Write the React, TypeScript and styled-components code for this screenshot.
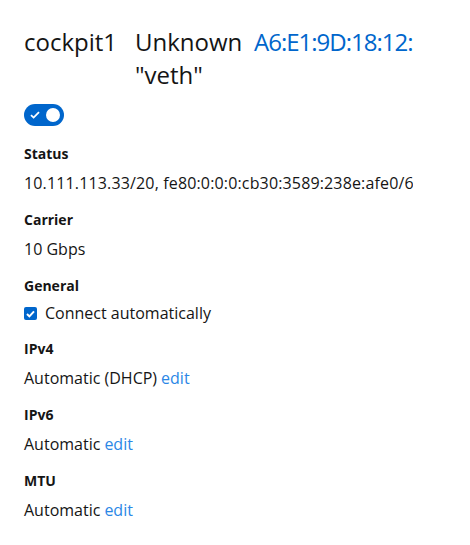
import React from "react";
import styled, { createGlobalStyle } from "styled-components";

const Global = createGlobalStyle`
  html, body { margin: 0; padding: 0; background: #fff; }
  body { font-family: "Open Sans", "Liberation Sans", sans-serif; color: #151515; }
`;

const Page = styled.div`
  width: 389px;
  padding: 25px 0 0 24px;
  overflow: hidden;
`;

const Header = styled.div`
  display: grid;
  grid-template-columns: 94px 102px 1fr;
  column-gap: 17px;
  font-size: 24px;
  line-height: 33px;
  white-space: nowrap;
`;

const HeaderCell = styled.div<{ $link?: boolean }>`
  display: flex;
  flex-direction: column;
  color: ${(p) => (p.$link ? "#0066cc" : "#151515")};
  letter-spacing: ${(p) => (p.$link ? "-1px" : "0")};
`;

const Switch = styled.label`
  display: inline-flex;
  margin: 13px 0 17px;
`;

const SwitchTrack = styled.span`
  position: relative;
  width: 40px;
  height: 22px;
  border-radius: 11px;
  background: #0066cc;
  display: inline-flex;
  align-items: center;
`;

const SwitchKnob = styled.span`
  position: absolute;
  right: 4px;
  top: 4px;
  width: 14px;
  height: 14px;
  border-radius: 50%;
  background: #fff;
`;

const SwitchIcon = styled.svg`
  margin-left: 6px;
`;

const Group = styled.div`
  display: flex;
  flex-direction: column;
  gap: 7px;
  margin-bottom: 14px;
`;

const Label = styled.div`
  font-size: 14px;
  line-height: 21px;
  font-weight: 700;
`;

const Value = styled.div<{ $compact?: boolean; $wide?: boolean }>`
  font-size: 16px;
  line-height: ${(p) => (p.$compact ? "21px" : "24px")};
  letter-spacing: ${(p) => (p.$wide ? "0.15px" : "0")};
  white-space: nowrap;
  display: flex;
  align-items: center;
  gap: 8px;
`;

const Link = styled.a`
  color: #2b87e6;
  text-decoration: none;
  margin-left: 4px;
`;

const Check = styled.span`
  width: 13px;
  height: 13px;
  border-radius: 2px;
  background: #0066cc;
  display: inline-flex;
  align-items: center;
  justify-content: center;
`;

export default function App() {
  return (
    <>
      <Global />
      <Page>
        <Header>
          <HeaderCell>cockpit1</HeaderCell>
          <HeaderCell>
            <span>Unknown</span>
            <span>"veth"</span>
          </HeaderCell>
          <HeaderCell $link>A6:E1:9D:18:12:</HeaderCell>
        </Header>
        <Switch>
          <SwitchTrack>
            <SwitchIcon width="10" height="8" viewBox="0 0 10 8">
              <path d="M1 4.2 L3.6 6.6 L9 1.2" stroke="#fff" strokeWidth="1.8" fill="none" />
            </SwitchIcon>
            <SwitchKnob />
          </SwitchTrack>
        </Switch>
        <Group>
          <Label>Status</Label>
          <Value $wide>10.111.113.33/20, fe80:0:0:0:cb30:3589:238e:afe0/64</Value>
        </Group>
        <Group>
          <Label>Carrier</Label>
          <Value>10 Gbps</Value>
        </Group>
        <Group>
          <Label>General</Label>
          <Value $compact>
            <Check>
              <svg width="9" height="8" viewBox="0 0 9 8">
                <path d="M1 4 L3.4 6.4 L8 1.4" stroke="#fff" strokeWidth="2" fill="none" />
              </svg>
            </Check>
            Connect automatically
          </Value>
        </Group>
        <Group>
          <Label>IPv4</Label>
          <Value>
            <span>
              Automatic (DHCP)<Link href="#">edit</Link>
            </span>
          </Value>
        </Group>
        <Group>
          <Label>IPv6</Label>
          <Value>
            <span>
              Automatic<Link href="#">edit</Link>
            </span>
          </Value>
        </Group>
        <Group>
          <Label>MTU</Label>
          <Value>
            <span>
              Automatic<Link href="#">edit</Link>
            </span>
          </Value>
        </Group>
      </Page>
    </>
  );
}
